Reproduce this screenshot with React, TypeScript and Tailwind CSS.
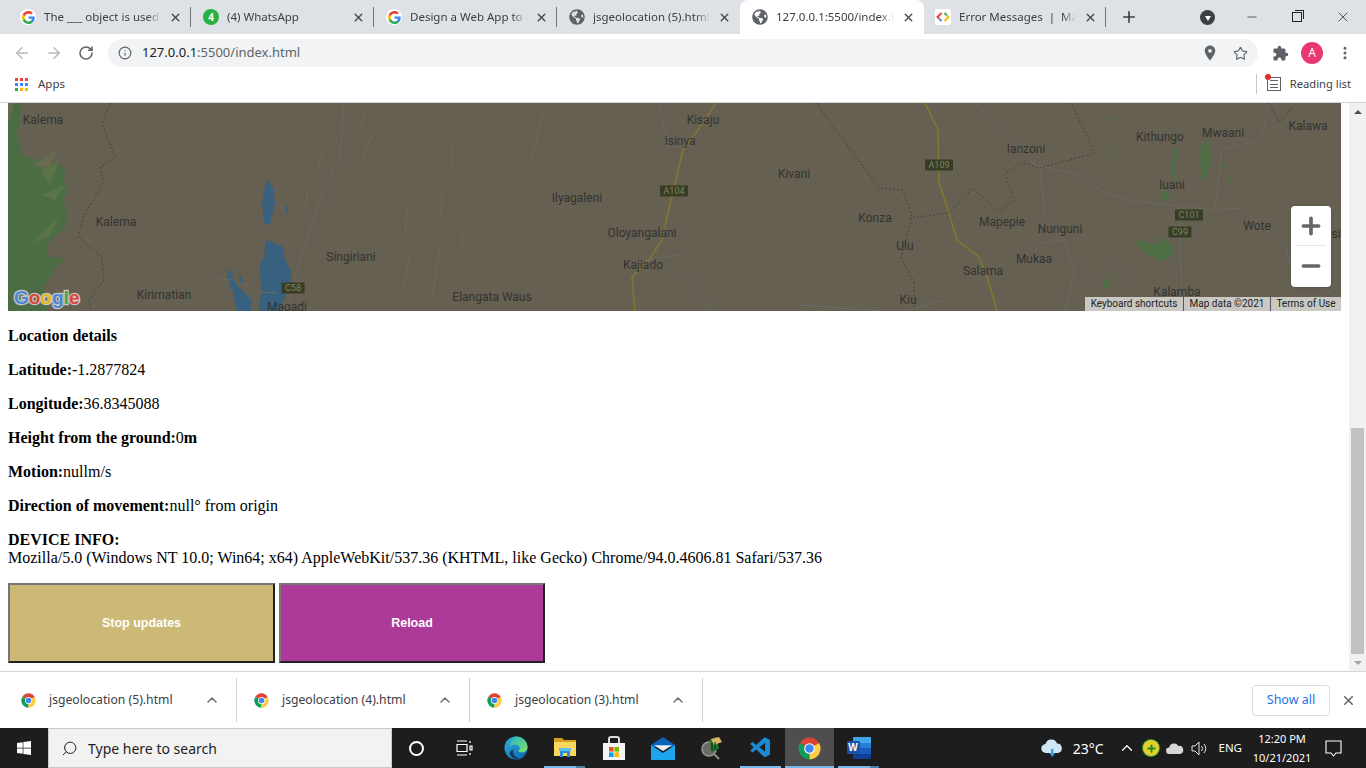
import { ArrowLeft, ArrowRight, RotateCw, Info, Star, Plus, X, Minus, MoreVertical, ChevronUp, Search } from 'lucide-react';
import { FaGlobeAmericas, FaWindows } from 'react-icons/fa';
import { MdExtension, MdPlace } from 'react-icons/md';
import { VscVscode } from 'react-icons/vsc';

const ui = "font-['Noto_Sans',sans-serif]";

function GoogleG({ size = 16 }: { size?: number }) {
  return (
    <svg width={size} height={size} viewBox="0 0 48 48" className="shrink-0">
      <path fill="#EA4335" d="M24 9.5c3.54 0 6.71 1.22 9.21 3.6l6.85-6.85C35.9 2.38 30.47 0 24 0 14.62 0 6.51 5.38 2.56 13.22l7.98 6.19C12.43 13.72 17.74 9.5 24 9.5z" />
      <path fill="#4285F4" d="M46.98 24.55c0-1.57-.15-3.09-.38-4.55H24v9.02h12.94c-.58 2.96-2.26 5.48-4.78 7.18l7.73 6c4.51-4.18 7.09-10.36 7.09-17.65z" />
      <path fill="#FBBC05" d="M10.53 28.59c-.48-1.45-.76-2.99-.76-4.59s.27-3.14.76-4.59l-7.98-6.19C.92 16.46 0 20.12 0 24c0 3.88.92 7.54 2.56 10.78l7.97-6.19z" />
      <path fill="#34A853" d="M24 48c6.48 0 11.93-2.13 15.89-5.81l-7.73-6c-2.15 1.45-4.92 2.3-8.16 2.3-6.26 0-11.57-4.22-13.47-9.91l-7.98 6.19C6.51 42.62 14.62 48 24 48z" />
    </svg>
  );
}

function ChromeLogo({ size = 16 }: { size?: number }) {
  return (
    <svg width={size} height={size} viewBox="0 0 24 24" className="shrink-0">
      <path fill="#DB4437" d="M12 12L2 6.2A11.6 11.6 0 0 1 22 6.2z" />
      <path fill="#0F9D58" d="M12 12L2 6.2A11.6 11.6 0 0 0 12 23.6z" />
      <path fill="#FFCD40" d="M12 12L22 6.2A11.6 11.6 0 0 1 12 23.6z" />
      <circle cx="12" cy="12" r="5.6" fill="#fff" />
      <circle cx="12" cy="12" r="4.4" fill="#4285F4" />
    </svg>
  );
}

function TabIcon({ kind }: { kind: string }) {
  if (kind === 'g') {
    return (
      <span className="flex h-4 w-4 shrink-0 items-center justify-center rounded-full bg-white">
        <GoogleG size={13} />
      </span>
    );
  }
  if (kind === 'wa') {
    return (
      <span className="flex h-4 w-4 shrink-0 items-center justify-center rounded-full bg-[#25b144]">
        <span className="text-[10px] font-bold leading-none text-white">4</span>
      </span>
    );
  }
  if (kind === 'dev') {
    return (
      <svg width="16" height="16" viewBox="0 0 16 16" className="shrink-0">
        <rect width="16" height="16" rx="2" fill="#fff" />
        <path d="M6.5 4L2.5 8l1.6 1.6" fill="none" stroke="#ea4335" strokeWidth="2" />
        <path d="M4.1 9.6L6.5 12" fill="none" stroke="#4285f4" strokeWidth="2" />
        <path d="M9.5 4l2.4 2.4" fill="none" stroke="#34a853" strokeWidth="2" />
        <path d="M11.9 6.4L13.5 8l-4 4" fill="none" stroke="#fbbc05" strokeWidth="2" />
      </svg>
    );
  }
  return <FaGlobeAmericas className="shrink-0 text-[#5f6368]" size={16} />;
}

const tabs = [
  { kind: 'g', title: 'The ___ object is used', sep: true, left: 'w-[183px] pl-3' },
  { kind: 'wa', title: '(4) WhatsApp', sep: true, left: 'w-[183px] pl-3' },
  { kind: 'g', title: 'Design a Web App to d', sep: true, left: 'w-[183px] pl-3' },
  { kind: 'globe', title: 'jsgeolocation (5).html', sep: false, left: 'w-[183px] pl-3' },
];

function ChromeTab({ kind, title, sep, className, active }: { kind: string; title: string; sep: boolean; className: string; active?: boolean }) {
  return (
    <div className={`relative flex h-[34px] shrink-0 items-center gap-2 pr-[9px] ${className} ${active ? 'rounded-t-lg bg-white pl-3' : ''}`}>
      <TabIcon kind={kind} />
      <span className="min-w-0 flex-1 overflow-hidden whitespace-nowrap text-[11.5px] text-[#3c4043] [mask-image:linear-gradient(to_right,black_88%,transparent)]">
        {title}
      </span>
      <X size={13} strokeWidth={2.6} className="shrink-0 text-[#45494d]" />
      {sep && <span className="absolute right-0 top-[7px] h-5 w-px bg-[#72767a]" />}
    </div>
  );
}

function TabStrip() {
  return (
    <div className="flex h-[34px] shrink-0 items-center bg-[#dee1e6] pl-2">
      {tabs.map((t) => (
        <ChromeTab key={t.title} kind={t.kind} title={t.title} sep={t.sep} className={t.left} />
      ))}
      <ChromeTab kind="globe" title="127.0.0.1:5500/index.h" sep={false} className="w-[184px]" active />
      <ChromeTab kind="dev" title={'Error Messages\u00a0\u00a0|\u00a0\u00a0Map'} sep className="w-[182px] pl-[11px]" />
      <Plus size={18} strokeWidth={2.2} className="ml-[14px] text-[#3c4043]" />
      <div className="ml-[62px] flex h-[15px] w-[15px] items-center justify-center rounded-full bg-[#3c4043]">
        <span className="mt-[2px] h-0 w-0 border-x-[3px] border-t-[5px] border-x-transparent border-t-white" />
      </div>
      <Minus size={14} strokeWidth={1.2} className="ml-[30px] text-[#222]" />
      <div className="relative ml-[33px] h-[10px] w-[10px] border border-[#222] bg-[#dee1e6]">
        <span className="absolute -right-[3px] -top-[3px] h-[9px] w-[9px] border-r border-t border-[#222]" />
      </div>
      <X size={16} strokeWidth={1.1} className="ml-[33px] text-[#222]" />
    </div>
  );
}

function Toolbar() {
  return (
    <div className="flex h-[37px] shrink-0 items-center bg-white pt-px">
      <ArrowLeft size={18} strokeWidth={2} className="ml-[13px] text-[#b7babd]" />
      <ArrowRight size={18} strokeWidth={2} className="ml-[14px] text-[#b7babd]" />
      <RotateCw size={16} strokeWidth={2.3} className="ml-[15px] text-[#5f6368]" />
      <div className="ml-[14px] flex h-7 w-[1150px] items-center rounded-full bg-[#f1f3f4] pl-[10px]">
        <Info size={14} strokeWidth={2} className="text-[#5f6368]" />
        <span className="ml-[10px] text-[13px] text-[#202124]">
          127.0.0.1<span className="text-[#5f6368]">:5500/index.html</span>
        </span>
        <MdPlace size={18} className="ml-auto text-[#5f6368]" />
        <Star size={15} strokeWidth={1.8} className="ml-[14px] mr-[10px] text-[#5f6368]" />
      </div>
      <MdExtension size={17} className="ml-[14px] text-[#5f6368]" />
      <div className="ml-[12px] flex h-[22px] w-[22px] items-center justify-center rounded-full bg-[#e8386f] text-[12px] text-white">A</div>
      <MoreVertical size={16} strokeWidth={2.6} className="ml-[14px] text-[#5f6368]" />
    </div>
  );
}

function BookmarksBar() {
  const dots = ['#ea4335', '#ea4335', '#ea4335', '#4285f4', '#4285f4', '#4285f4', '#34a853', '#fbbc05', '#fbbc05'];
  return (
    <div className="flex h-[32px] shrink-0 items-center border-b border-[#d2d3d5] bg-white pb-[5px]">
      <div className="ml-[15px] grid w-[13px] grid-cols-3 gap-[2px]">
        {dots.map((c, i) => (
          <span key={i} className="h-[3px] w-[3px]" style={{ backgroundColor: c }} />
        ))}
      </div>
      <span className="ml-[10px] text-[11.5px] text-[#3c4043]">Apps</span>
      <span className="ml-auto h-5 w-px bg-[#c8cacc]" />
      <div className="relative ml-[10px] flex h-[14px] w-[14px] flex-col justify-between border border-[#5f6368] p-[2px]">
        <span className="h-px bg-[#5f6368]" />
        <span className="h-px bg-[#5f6368]" />
        <span className="h-px bg-[#5f6368]" />
        <span className="absolute -left-[3px] -top-[4px] h-[6px] w-[6px] rounded-full bg-[#d93025]" />
      </div>
      <span className="ml-[9px] mr-[15px] text-[11.2px] text-[#3c4043]">Reading list</span>
    </div>
  );
}

const labels = [
  ['Kalema', 43, 120], ['Kalema', 116, 222], ['Kirimatian', 164, 295], ['Singiriani', 351, 257], ['Magadi', 287, 307],
  ['Elangata Waus', 492, 297], ['Ilyagaleni', 577, 198], ['Oloyangalani', 642, 233], ['Kajiado', 643, 265], ['Isinya', 680, 141],
  ['Kisaju', 703, 120], ['Kivani', 794, 174], ['Konza', 875, 218], ['Ulu', 905, 246], ['Kiu', 908, 300],
  ['Mapepie', 1002, 222], ['Nunguni', 1060, 229], ['Mukaa', 1034, 259], ['Salama', 983, 271], ['Ianzoni', 1026, 149],
  ['Kithungo', 1160, 137], ['Mwaani', 1223, 133], ['Kalawa', 1308, 126], ['Iuani', 1172, 185], ['Wote', 1257, 226],
  ['Kalamba', 1177, 292], ['si', 1336, 234],
] as const;

const shields = [
  ['A104', 674, 191, 28], ['C58', 293, 288, 23], ['A109', 939, 165, 28], ['C101', 1189, 215, 28], ['C99', 1180, 232, 23],
] as const;

function MapArt() {
  return (
    <svg viewBox="8 103 1333 208" className="absolute inset-0 h-full w-full">
      {/* forest on the west side */}
      <path fill="#4b6d44" d="M8 103L20 103L22 115L17 135L22 155L44 162L66 167L63 178L68 190L63 200L68 215L65 227L48 243L46 257L65 258L54 270L44 287L47 311L8 311z" />
      <path fill="#5a7448" d="M40 170L60 160L50 185zM42 195L65 185L55 200zM30 245L60 215L50 235z" />
      <path fill="#6a6a4e" d="M32 165L58 150L48 168zM8 103L14 103L8 125z" />
      {/* water */}
      <g fill="#38607f">
        <path d="M266 180L273 187L275 203L270 225L264 223L262 203z" />
        <path d="M286 206L288 205L288 213L286 214z" />
        <path d="M266 240L283 247L285 260L291 270L290 283L279 311L259 311L261 290L260 263L264 257z" />
        <path d="M229 267L232 275L237 285L252 300L251 311L237 311L233 293L227 277z" />
        <path d="M239 271L243 282L240 284z" />
      </g>
      {/* faint olive streaks */}
      <g fill="none" stroke="#6b6850" strokeWidth="1.6">
        <path d="M365 110L360 130M322 155L318 170M375 130L362 158M400 150L385 157M545 105L540 125L530 165M451 145L452 165M442 190L441 215M408 205L405 235M463 235L461 250" />
        <path d="M410 255L402 295M440 245L432 300M308 190L305 205" />
      </g>
      {/* grey roads and rivers */}
      <g fill="none" stroke="#6a6964" strokeWidth="1">
        <path d="M344 103L340 157L327 183L300 257L290 300L288 311" />
        <path d="M213 278L235 280L261 292L277 293" />
        <path d="M658 103L668 140L683 150M645 260L683 254" />
        <path d="M975 103L1005 135L1035 165L1080 175L1100 190L1130 200L1170 205L1215 210L1240 208L1285 245L1290 262L1341 300" />
        <path d="M1040 168L1045 215L1065 240L1075 270L1065 311" />
        <path d="M1030 262L1040 243L1065 240M1090 290L1115 262L1140 290" />
        <path d="M1215 210L1222 150L1260 140L1270 103M1180 220L1182 311" />
        <path d="M683 270L710 311M800 305L880 311M908 310L945 300" />
      </g>
      {/* highways */}
      <g fill="none" stroke="#85762f" strokeWidth="1.5">
        <path d="M716 103L700 127L683 150L671 200L662 240L649 260L632 277L635 311" />
        <path d="M925 103L938 130L939 183L949 213L957 240L979 257L988 280L997 311" />
      </g>
      {/* dotted boundaries */}
      <g fill="none" stroke="#3e3c34" strokeWidth="1" strokeDasharray="1.5 2.5">
        <path d="M111 103L102 123L115 157L100 168L104 183L83 217L78 237L102 257L104 280L89 300L91 311" />
        <path d="M816 103L879 188L903 190L912 217L901 257L914 283L914 311" />
        <path d="M909 218L949 213L973 188L999 212L1014 200L1005 173L1023 163L1040 168L1095 153L1071 103" />
        <path d="M1268 103L1280 122L1292 108" />
      </g>
      {/* green patches in the east */}
      <g fill="#4f6f47">
        <path d="M1201 145L1208 140L1211 160L1206 180L1202 178L1200 160z" />
        <path d="M1134 240L1145 242L1156 245L1162 237L1173 247L1173 255L1162 261L1145 253z" />
        <path d="M1173 143L1177 150L1175 183L1172 175z" />
        <path d="M1160 192L1166 190L1170 200L1164 202z" />
        <path d="M1223 165L1230 163L1222 170zM1227 175L1232 183L1229 184z" />
        <path d="M1105 117L1112 118L1107 120zM1108 145L1112 150L1110 152zM1116 155L1118 160L1116 161z" />
        <path d="M1103 280L1110 278L1110 288L1104 288z" />
      </g>
    </svg>
  );
}

function MapPanel() {
  return (
    <div className="relative h-[208px] overflow-hidden bg-[#656052]">
      <MapArt />
      {labels.map(([name, x, y]) => (
        <span
          key={`${name}-${x}`}
          className="absolute -translate-x-1/2 -translate-y-1/2 whitespace-nowrap font-['Roboto',sans-serif] text-[12px] leading-none text-[#333331]"
          style={{ left: x - 8, top: y - 103 }}
        >
          {name}
        </span>
      ))}
      {shields.map(([name, x, y, w]) => (
        <span
          key={name}
          className="absolute flex h-[11px] -translate-x-1/2 -translate-y-1/2 items-center justify-center bg-[#383d25] font-['Roboto',sans-serif] text-[9px] leading-none text-[#82845f]"
          style={{ left: x - 8, top: y - 103, width: w }}
        >
          {name}
        </span>
      ))}
      <span className="absolute bottom-[2px] left-[6px] font-['Liberation_Sans',sans-serif] text-[19px] font-bold leading-[22px] [-webkit-text-stroke:2.5px_#c6c7c4] [paint-order:stroke]">
        <span className="text-[#4c86d8]">G</span>
        <span className="text-[#d8483e]">o</span>
        <span className="text-[#e6b619]">o</span>
        <span className="text-[#4c86d8]">g</span>
        <span className="text-[#3ea45a]">l</span>
        <span className="text-[#d8483e]">e</span>
      </span>
      {/* zoom control */}
      <div className="absolute right-[10px] top-[103px] flex h-[81px] w-10 flex-col items-center rounded-sm bg-white shadow-sm">
        <Plus size={26} strokeWidth={3.4} className="mt-[7px] text-[#666]" />
        <span className="mt-[6px] h-px w-[30px] bg-[#e6e6e6]" />
        <Minus size={26} strokeWidth={3.4} className="mt-[7px] text-[#666]" />
      </div>
      {/* attribution */}
      <div className="absolute bottom-0 right-0 flex h-[14px] w-[256px] items-center bg-[#c9c8c3] font-['Roboto',sans-serif] text-[10px] leading-none text-[#222]">
        <span className="w-[99px] border-r border-[#555] text-center leading-[14px]">Keyboard shortcuts</span>
        <span className="w-[87px] border-r border-[#555] text-center leading-[14px]">Map data ©2021</span>
        <span className="flex-1 text-center">Terms of Use</span>
      </div>
    </div>
  );
}

function PageScrollbar() {
  return (
    <div className="flex w-[17px] shrink-0 flex-col items-center bg-[#f1f1f1]">
      <div className="flex h-[17px] items-center justify-center">
        <span className="h-0 w-0 border-x-[4px] border-b-[4px] border-x-transparent border-b-[#505050]" />
      </div>
      <div className="flex-1" />
      <div className="h-[226px] w-[13px] bg-[#c1c1c1]" />
      <div className="flex h-[17px] items-center justify-center">
        <span className="h-0 w-0 border-x-[4px] border-t-[4px] border-x-transparent border-t-[#a3a3a3]" />
      </div>
    </div>
  );
}

function Page() {
  return (
    <div className="flex min-h-0 flex-1">
      <div className="flex-1 overflow-hidden bg-white px-2 font-['Liberation_Serif',serif] text-[16px] leading-[18px] text-black">
        <MapPanel />
        <p className="my-4 font-bold">Location details</p>
        <p className="my-4"><b>Latitude:</b>-1.2877824</p>
        <p className="my-4"><b>Longitude:</b>36.8345088</p>
        <p className="my-4"><b>Height from the ground:</b>0<b>m</b></p>
        <p className="my-4"><b>Motion:</b>nullm/s</p>
        <p className="my-4"><b>Direction of movement:</b>null° from origin</p>
        <p className="mt-4"><b>DEVICE INFO:</b></p>
        <p>Mozilla/5.0 (Windows NT 10.0; Win64; x64) AppleWebKit/537.36 (KHTML, like Gecko) Chrome/94.0.4606.81 Safari/537.36</p>
        <div className="mt-4 flex gap-1">
          <button className="h-20 w-[267px] border-2 border-b-[#212121] border-l-[#767676] border-r-[#212121] border-t-[#767676] bg-[#cbb975] font-['Liberation_Sans',sans-serif] text-[12.5px] font-bold text-white">
            Stop updates
          </button>
          <button className="h-20 w-[266px] border-2 border-b-[#212121] border-l-[#767676] border-r-[#212121] border-t-[#767676] bg-[#ab3a98] font-['Liberation_Sans',sans-serif] text-[12.5px] font-bold text-white">
            Reload
          </button>
        </div>
      </div>
      <PageScrollbar />
    </div>
  );
}

function DownloadShelf() {
  const files = ['jsgeolocation (5).html', 'jsgeolocation (4).html', 'jsgeolocation (3).html'];
  return (
    <div className="flex h-[57px] shrink-0 items-center border-t border-[#d5d6d8] bg-white">
      {files.map((f, i) => (
        <div key={f} className={`flex h-[44px] items-center border-r border-[#d0d1d3] ${i === 0 ? 'w-[237px] pl-[21px]' : 'w-[233px] pl-[17px]'}`}>
          <ChromeLogo size={15} />
          <span className="ml-[13px] text-[12.2px] text-[#3c4043]">{f}</span>
          <ChevronUp size={16} strokeWidth={2.2} className="ml-[31px] text-[#6b6e72]" />
        </div>
      ))}
      <button className="ml-auto h-[31px] w-[78px] rounded border border-[#dadce0] text-[12.5px] text-[#1a73e8]">Show all</button>
      <X size={15} strokeWidth={2.4} className="ml-[11px] mr-[10px] text-[#5f6368]" />
    </div>
  );
}

function EdgeIcon() {
  return (
    <svg width="24" height="24" viewBox="0 0 24 24">
      <defs>
        <linearGradient id="edgeA" x1="0" y1="0" x2="1" y2="1">
          <stop offset="0" stopColor="#2fb5d8" />
          <stop offset="1" stopColor="#0a5fb4" />
        </linearGradient>
        <linearGradient id="edgeB" x1="0" y1="0" x2="1" y2="1">
          <stop offset="0" stopColor="#2ab4c8" />
          <stop offset="1" stopColor="#7ee06a" />
        </linearGradient>
      </defs>
      <circle cx="12" cy="12" r="11.5" fill="url(#edgeA)" />
      <path fill="url(#edgeB)" d="M12 .5c6.4 0 11.5 4.8 11.5 10.8 0 3.5-3 5.2-5.6 5.2-1.8 0-3.2-.6-3.9-1.4 2-1 2.2-3.4.8-5-1.8-2-6-2-9 .4C6.6 5 9 .5 12 .5z" />
      <path fill="#14233a" d="M9.5 13.5c-1.4 3.4 1 7.6 6 8.8-4 1.6-9-.6-10-5.4 1-2 2.6-3.2 4-3.4z" opacity=".75" />
    </svg>
  );
}

function ExplorerIcon() {
  return (
    <svg width="24" height="22" viewBox="0 0 24 22">
      <path fill="#d79f1d" d="M1 1h8l2 2h12v4H1z" />
      <path fill="#f9d65c" d="M1 5h22v14H1z" />
      <path fill="#2a8fd8" d="M7 12h10v8h-3v-4h-4v4H7z" />
      <path fill="#5bc0f0" d="M6 11h12v3H6z" />
    </svg>
  );
}

function StoreIcon() {
  return (
    <svg width="24" height="25" viewBox="0 0 24 25">
      <path fill="none" stroke="#d8d8d8" strokeWidth="2" d="M7 8V3a2 2 0 0 1 2-2h6a2 2 0 0 1 2 2v5" />
      <path fill="#f4f4f4" d="M1 7h22v17H1z" />
      <path fill="#f25022" d="M7 11h4.6v4.6H7z" />
      <path fill="#7fba00" d="M12.4 11H17v4.6h-4.6z" />
      <path fill="#00a4ef" d="M7 16.4h4.6V21H7z" />
      <path fill="#ffb900" d="M12.4 16.4H17V21h-4.6z" />
    </svg>
  );
}

function MailIcon() {
  return (
    <svg width="24" height="23" viewBox="0 0 24 23">
      <path fill="#0b63b8" d="M12 0l12 8v2H0V8z" />
      <path fill="#1ca4ec" d="M0 8l12 8 12-8v15H0z" />
      <path fill="#e8f1f8" d="M3 8.2h18L12 14z" />
    </svg>
  );
}

function ToolIcon() {
  return (
    <svg width="24" height="24" viewBox="0 0 24 24">
      <circle cx="9" cy="13" r="7" fill="#6b6b66" stroke="#9a9a95" strokeWidth="1.5" />
      <path d="M14 18l5 5" stroke="#8d8d88" strokeWidth="2" />
      <path fill="#1e7a2e" d="M9 4l7-3 3 11-7 5z" />
      <path fill="#d9b36a" d="M11 3l8-2 3 5-8 3z" />
      <path d="M12 7v8M15 6v8" stroke="#0d2a12" strokeWidth="1" />
    </svg>
  );
}

function WordIcon() {
  return (
    <div className="relative h-[22px] w-[24px]">
      <div className="absolute right-0 top-0 flex h-full w-[18px] flex-col overflow-hidden rounded-[1px]">
        <span className="flex-1 bg-[#41a5ee]" />
        <span className="flex-1 bg-[#2b7cd3]" />
        <span className="flex-1 bg-[#185abd]" />
        <span className="flex-1 bg-[#103f91]" />
      </div>
      <span className="absolute left-0 top-[4px] flex h-[13px] w-[13px] items-center justify-center rounded-[1px] bg-[#1a52a8] font-['Liberation_Sans',sans-serif] text-[10px] font-bold leading-none text-white">
        W
      </span>
    </div>
  );
}

function TaskCell({ children, running, active, narrow, stacked }: { children: React.ReactNode; running?: boolean; active?: boolean; narrow?: boolean; stacked?: boolean }) {
  return (
    <div className={`relative flex h-10 items-center justify-center ${narrow ? 'w-12' : 'w-[49px]'} ${active ? 'bg-[#4e4e4e]' : ''}`}>
      {children}
      {running && (
        <span className={`absolute bottom-0 flex h-[2px] ${active ? 'inset-x-0' : 'inset-x-[4px]'} bg-[#76b9ed]`}>
          {stacked && <span className="ml-auto h-full w-[9px] bg-[#4a7fa8]" />}
        </span>
      )}
    </div>
  );
}

function Taskbar() {
  return (
    <div className="flex h-10 shrink-0 items-center bg-[#1d1d1d] text-white">
      <div className="flex h-10 w-12 items-center justify-center">
        <FaWindows size={16} />
      </div>
      <div className="flex h-10 w-[344px] items-center border border-[#c9c9c9] bg-[#f2f2f2] pl-[12px] text-[#1e1e1e]">
        <Search size={17} strokeWidth={1.4} className="-scale-x-100" />
        <span className="ml-[10px] text-[14px]">Type here to search</span>
      </div>
      <TaskCell narrow>
        <span className="h-[15px] w-[15px] rounded-full border-[2.5px] border-white" />
      </TaskCell>
      <TaskCell narrow>
        <svg width="17" height="16" viewBox="0 0 17 16" fill="none" stroke="#fff" strokeWidth="1.2">
          <path d="M1 1h10M1 15h10M1 4.5h10v7H1z" />
          <path d="M14 1v2M14 13v2M14 6h2v4h-2z" />
        </svg>
      </TaskCell>
      <div className="w-[3px]" />
      <TaskCell><EdgeIcon /></TaskCell>
      <TaskCell running stacked><ExplorerIcon /></TaskCell>
      <TaskCell><StoreIcon /></TaskCell>
      <TaskCell><MailIcon /></TaskCell>
      <TaskCell><ToolIcon /></TaskCell>
      <TaskCell running><VscVscode size={24} className="text-[#1a8ad4]" /></TaskCell>
      <TaskCell running active><ChromeLogo size={23} /></TaskCell>
      <TaskCell running stacked><WordIcon /></TaskCell>
      <div className="ml-auto flex h-10 items-center">
        <svg width="22" height="18" viewBox="0 0 22 18" className="mr-[10px]">
          <path fill="#cfe6f7" d="M5 14a4.5 4.5 0 0 1-.5-9A6 6 0 0 1 16 4.5 4.8 4.8 0 0 1 17 14z" />
          <path fill="#3d9be0" d="M10 10h2.4v4H14l-2.8 4-2.8-4H10z" />
        </svg>
        <span className="text-[14px]">23°C</span>
        <ChevronUp size={18} strokeWidth={1.6} className="ml-[15px]" />
        <span className="ml-[7px] flex h-4 w-4 items-center justify-center rounded-full bg-[#e3d02c] ring-1 ring-[#2f9e2f]">
          <Plus size={11} strokeWidth={4} className="text-[#238a23]" />
        </span>
        <svg width="18" height="12" viewBox="0 0 16 11" className="ml-[7px]">
          <path fill="#d6d6d6" d="M3 11a3 3 0 0 1-.3-6A4.5 4.5 0 0 1 11 3.6 3.7 3.7 0 0 1 12.5 11z" />
        </svg>
        <svg width="17" height="15" viewBox="0 0 17 15" fill="none" stroke="#e6e6e6" strokeWidth="1" className="ml-[7px]">
          <path d="M1 5h3l4-4v13l-4-4H1z" />
          <path d="M10.5 5a3.5 3.5 0 0 1 0 5M13 3a6.5 6.5 0 0 1 0 9" />
        </svg>
        <span className="ml-[10px] text-[11.5px]">ENG</span>
        <div className="ml-[8px] flex w-[64px] flex-col items-center text-[11px] leading-[19px]">
          <span>12:20 PM</span>
          <span>10/21/2021</span>
        </div>
        <svg width="17" height="17" viewBox="0 0 17 17" fill="none" stroke="#fff" strokeWidth="1.1" className="ml-[11px] mr-[24px]">
          <path d="M1 1h15v12h-5l-2.5 3-2.5-3H1z" />
        </svg>
      </div>
    </div>
  );
}

export default function App() {
  return (
    <div className={`flex h-screen w-full flex-col overflow-hidden bg-white ${ui}`}>
      <TabStrip />
      <Toolbar />
      <BookmarksBar />
      <Page />
      <DownloadShelf />
      <Taskbar />
    </div>
  );
}
